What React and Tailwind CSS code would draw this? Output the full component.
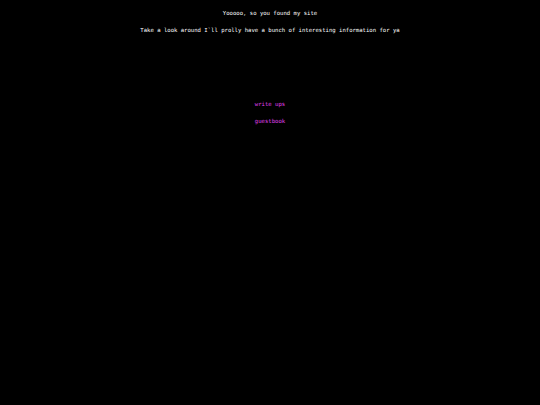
export default function App() {
    return (
        <div className="min-h-[405px] w-full bg-black text-white text-center font-['DejaVu_Sans_Mono',monospace] text-[5.6px] leading-[8px]">
            <div className="pt-[9px]">
                <p>Yooooo, so you found my site</p>
                <p className="mt-[9px]">Take a look around I`ll prolly have a bunch of interesting information for ya</p>
            </div>

            {/* links */}
            <div className="mt-[66px] flex flex-col items-center gap-[9px] text-[#e040f0]">
                <a href="#">write ups</a>
                <a href="#">guestbook</a>
            </div>
        </div>
    );
}
